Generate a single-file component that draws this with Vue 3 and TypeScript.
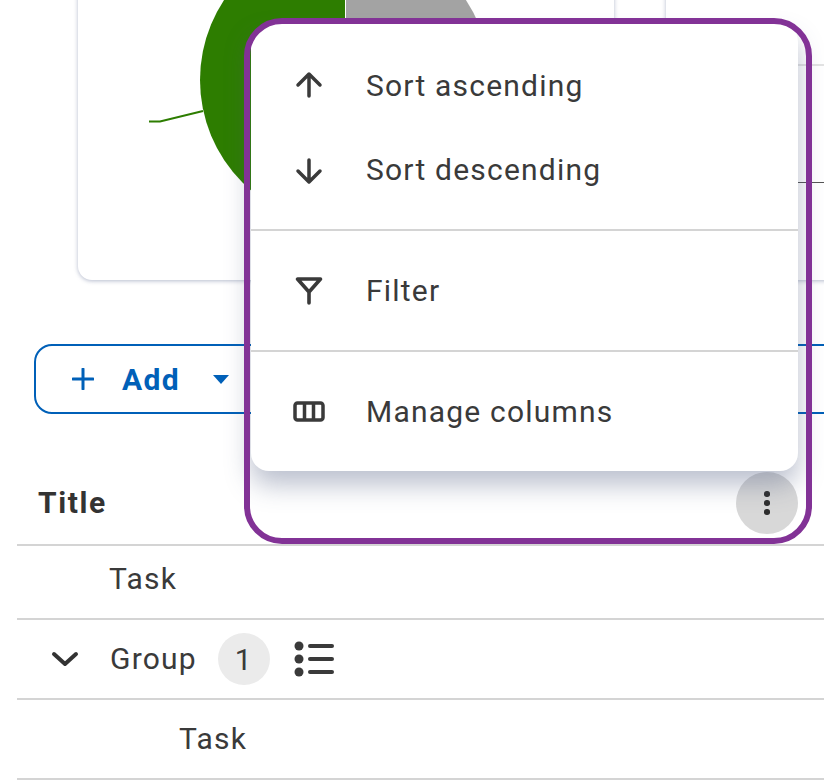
<script setup lang="ts">
/** Column header menu, open over the table, with the chart cards behind it. */
const sortItems = [
  { label: 'Sort ascending', icon: 'M15 25V4M4 14 15 3l11 11' },
  { label: 'Sort descending', icon: 'M15 5v21M4 16l11 11 11-11' },
];
</script>

<template>
  <div class="page">
    <section class="cards">
      <div class="card card-chart">
        <svg class="pie" width="536" height="300" viewBox="78 -20 536 300">
          <path d="M344 -65A145 145 0 1 0 344 225Z" fill="#2d7d00" transform="translate(1 0)" />
          <path d="M346 -65A145 145 0 0 1 490 80H346Z" fill="#a3a3a3" />
          <path d="M149 121.500H160L203 111" fill="none" stroke="#2d7d00" stroke-width="2" />
        </svg>
      </div>
      <div class="card card-side">
        <div class="rule rule-light"></div>
        <div class="rule rule-dark"></div>
      </div>
    </section>

    <div class="toolbar">
      <button class="add-btn" type="button">
        <svg width="22" height="22" viewBox="0 0 22 22" fill="none" stroke="#0060b8" stroke-width="3" stroke-linecap="round">
          <path d="M11 1v20M1 11h20" />
        </svg>
        <span class="add-label">Add</span>
        <svg class="caret" width="16" height="9" viewBox="0 0 16 9"><path d="M0 0h16L8 9Z" fill="#0060b8" /></svg>
      </button>
    </div>

    <div class="row head">
      <span class="head-title">Title</span>
      <button class="kebab" type="button">
        <i></i><i></i><i></i>
      </button>
    </div>
    <div class="row task-row">Task</div>
    <div class="row group-row">
      <svg class="chevron" width="28" height="16" viewBox="0 0 28 16" fill="none" stroke="#333" stroke-width="4" stroke-linecap="round" stroke-linejoin="round">
        <path d="M3 3l11 10L25 3" />
      </svg>
      <span class="lifted">Group</span>
      <span class="count">1</span>
      <svg class="list-icon" width="40" height="36" viewBox="0 0 40 36" fill="#3a3a3a">
        <circle cx="5" cy="5" r="4.500" />
        <circle cx="5" cy="18" r="4.500" />
        <circle cx="5" cy="31" r="4.500" />
        <rect x="14" y="3" width="26" height="4" rx="2" />
        <rect x="14" y="16" width="26" height="4" rx="2" />
        <rect x="14" y="29" width="26" height="4" rx="2" />
      </svg>
    </div>
    <div class="row task-row nested">Task</div>

    <div class="menu">
      <div class="menu-section first">
        <div v-for="item in sortItems" :key="item.label" class="menu-item">
          <svg class="menu-icon" width="30" height="30" viewBox="0 0 30 30" fill="none" stroke="#3a3a3a" stroke-width="3.500" stroke-linecap="round" stroke-linejoin="round">
            <path :d="item.icon" />
          </svg>
          <span>{{ item.label }}</span>
        </div>
      </div>
      <div class="menu-section">
        <div class="menu-item">
          <svg class="menu-icon" width="30" height="30" viewBox="0 0 30 30" fill="none" stroke="#3a3a3a" stroke-width="3.600" stroke-linecap="round" stroke-linejoin="round">
            <path d="M3.500 3h23L15 16ZM15 16v11" />
          </svg>
          <span>Filter</span>
        </div>
      </div>
      <div class="menu-section">
        <div class="menu-item">
          <svg class="menu-icon wide" width="32" height="30" viewBox="0 0 32 30" fill="none" stroke="#3a3a3a" stroke-width="3.500" stroke-linejoin="round">
            <rect x="2" y="6" width="28" height="17" rx="2.500" />
            <path d="M11.500 6v17M20.500 6v17" />
          </svg>
          <span>Manage columns</span>
        </div>
      </div>
    </div>
    <div class="focus-ring"></div>
  </div>
</template>

<style>
html,
body {
  margin: 0;
  background: #fff;
  overflow: hidden;
}
</style>

<style scoped>
.page {
  position: relative;
  width: 824px;
  height: 780px;
  overflow: hidden;
  background: #fff;
  color: #3a3a3a;
  font-family: Roboto, 'Liberation Sans', sans-serif;
  font-size: 30px;
  letter-spacing: 1.200px;
}
.cards {
  display: flex;
  gap: 52px;
  height: 300px;
  margin-top: -20px;
  padding-left: 78px;
  box-sizing: border-box;
}
.card {
  position: relative;
  flex: none;
  height: 300px;
  box-sizing: border-box;
  background: #fff;
  border-radius: 14px;
  box-shadow: 0 1px 4px rgba(70, 85, 130, 0.4);
}
.card-chart {
  width: 536px;
}
.card-side {
  width: 300px;
}
.pie {
  display: block;
}
.rule {
  position: absolute;
  left: 0;
  right: 0;
}
.rule-light {
  top: 84px;
  height: 2px;
  background: #e3e3e3;
}
.rule-dark {
  top: 202px;
  height: 1px;
  background: #555;
}
.toolbar {
  display: flex;
  margin-top: 64px;
  padding-left: 34px;
}
.add-btn {
  display: flex;
  align-items: center;
  flex: none;
  width: 900px;
  height: 70px;
  padding: 0 0 0 36px;
  box-sizing: border-box;
  border: 2px solid #0060b8;
  border-radius: 18px;
  background: #fff;
  font: inherit;
  letter-spacing: 1.400px;
  color: #0060b8;
}
.add-label {
  margin-left: 28px;
  font-weight: 700;
}
.caret {
  margin-left: 33px;
}
.row {
  display: flex;
  align-items: center;
  margin-left: 17px;
  border-bottom: 2px solid #d4d4d4;
  box-sizing: border-box;
}
.head {
  justify-content: space-between;
  height: 132px;
  padding: 58px 26px 10px 21px;
}
.head-title {
  position: relative;
  top: -1px;
  font-weight: 700;
  letter-spacing: 1.600px;
  color: #333;
}
.kebab {
  display: flex;
  flex-direction: column;
  align-items: center;
  justify-content: center;
  gap: 3.500px;
  width: 62px;
  height: 62px;
  padding: 0;
  border: 0;
  border-radius: 50%;
  background: #d8d8d8;
}
.kebab i {
  width: 5.500px;
  height: 5.500px;
  border-radius: 50%;
  background: #2e2e2e;
}
.task-row {
  height: 74px;
  padding: 0 0 8px 92px;
}
.task-row.nested {
  height: 80px;
  padding: 0 0 2px 162px;
}
.group-row {
  height: 80px;
  padding-left: 34px;
}
.lifted {
  position: relative;
  top: -1px;
}
.chevron {
  margin-right: 31px;
}
.count {
  display: flex;
  align-items: center;
  justify-content: center;
  width: 52px;
  height: 52px;
  margin-left: 21px;
  border-radius: 50%;
  background: #ebebeb;
}
.list-icon {
  margin-left: 24px;
}
.menu {
  position: absolute;
  top: 24px;
  left: 251px;
  width: 547px;
  height: 447px;
  box-sizing: border-box;
  background: #fff;
  border-radius: 18px;
  box-shadow: 0 14px 26px rgba(75, 90, 125, 0.38);
}
.menu-section {
  padding: 18px 0 17px;
  border-top: 2px solid #d4d4d4;
}
.menu-section.first {
  padding-top: 20px;
  border-top: 0;
}
.menu-item {
  display: flex;
  align-items: center;
  height: 84px;
  padding-left: 44px;
  line-height: 80px;
}
.menu-icon {
  flex: none;
  margin-right: 42px;
  margin-left: -1px;
}
.menu-icon.wide {
  margin-left: -2px;
  margin-right: 41px;
}
.focus-ring {
  position: absolute;
  top: 18px;
  left: 244px;
  width: 568px;
  height: 526px;
  box-sizing: border-box;
  border: 6px solid #823296;
  border-radius: 38px;
}
</style>
